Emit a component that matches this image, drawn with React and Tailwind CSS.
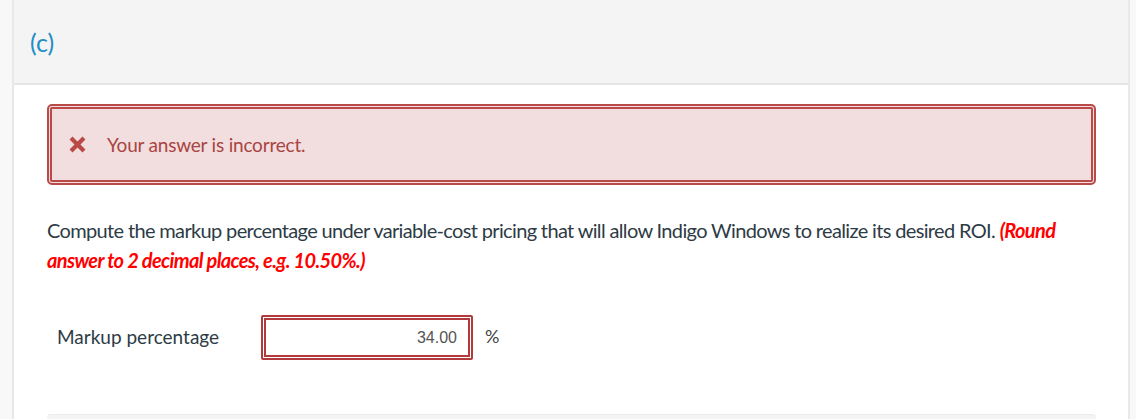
const font = { fontFamily: 'Lato, "Open Sans", sans-serif' };

const XMark = () => (
  <svg width="17" height="17" viewBox="0 0 16 16" className="shrink-0">
    <path d="M0.5 3.3 L3.3 0.5 L8 5.2 L12.7 0.5 L15.5 3.3 L10.8 8 L15.5 12.7 L12.7 15.5 L8 10.8 L3.3 15.5 L0.5 12.7 L5.2 8 Z" fill="#b94a48" />
  </svg>
);

export default function App() {
  return (
    <div className="min-h-[419px] w-[1136px] bg-[#f8f8f8] pl-3 pr-[6px] overflow-hidden" style={font}>
      <div className="border-x-2 border-[#e8e8e8] bg-white min-h-[419px]">
        <div className="h-[85px] bg-[#f4f4f4] border-b-2 border-[#e6e6e6] pl-[16px] pt-[27px]">
          <span className="text-[25px] leading-[30px] text-[#1f8dc6]">(c)</span>
        </div>
        <div className="pl-[33px] pr-[32px] pt-[19px]">
          <div className="h-[81px] rounded-[5px] border-[5px] border-double border-[#b94a48] bg-[#f2dede] flex items-center pl-[17px] gap-[21px]">
            <XMark />
            <span className="text-[19px] text-[#a94442] leading-none tracking-[-0.2px]">Your answer is incorrect.</span>
          </div>
          <div className="mt-[30px] text-[20px] leading-[30px] text-[#2d3b45] tracking-[-0.65px]">
            <div>
              Compute the markup percentage under variable-cost pricing that will allow Indigo Windows to realize its desired ROI.{' '}
              <span className="italic font-bold text-[#ff0000]">(Round</span>
            </div>
            <div className="italic font-bold text-[#ff0000]">answer to 2 decimal places, e.g. 10.50%.)</div>
          </div>
          <div className="mt-[40px] flex items-center h-[45px]">
            <span className="w-[214px] pl-[10px] text-[19px] text-[#2d3b45]">Markup percentage</span>
            <div className="w-[212px] h-[45px] rounded-[2px] border-[5px] border-double border-[#b33a3a] flex items-center justify-end pr-[11px]">
              <span className="text-[16px] text-[#555]" style={{ fontFamily: '"Liberation Sans", Arial, sans-serif' }}>34.00</span>
            </div>
            <span className="ml-[12px] text-[18px] text-[#444] -mt-[3px]">%</span>
          </div>
          <div className="mt-[54px] h-[20px] rounded-t-[4px] bg-[#f4f4f4] border-t border-[#ebebeb]" />
        </div>
      </div>
    </div>
  );
}
